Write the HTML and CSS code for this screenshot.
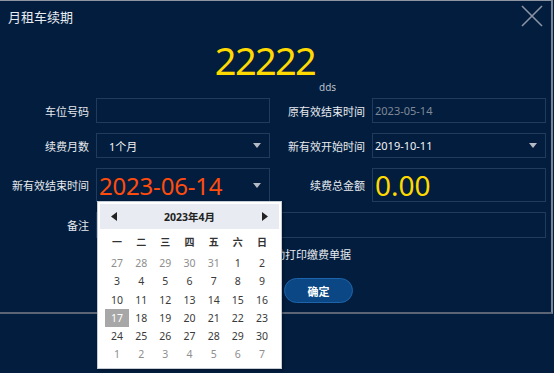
FILE: index.html
```html
<!DOCTYPE html>
<html lang="zh-CN">
<head>
    <meta charset="UTF-8">
    <meta name="viewport" content="width=device-width, initial-scale=1.0">
    <title>月租车续期</title>
<link rel="stylesheet" href="styles.css">
</head>
<body>
    <div class="page">
    <div class="dialog">
        <div class="dialog-head">
            <span class="dialog-title">月租车续期</span>
            <button class="close-btn" aria-label="关闭">
                <svg width="22" height="22" viewBox="0 0 22 22">
                    <path d="M1 1 L21 21 M21 1 L1 21" stroke="#8b94a3" stroke-width="1.6" fill="none"/>
                </svg>
            </button>
        </div>

        <div class="amount">
            <span class="amount-num">22222</span><span class="amount-unit">dds</span>
        </div>

        <div class="form">
            <label class="f-label">车位号码</label>
            <div class="f-box"></div>

            <label class="f-label">原有效结束时间</label>
            <div class="f-box f-right muted">2023-05-14</div>

            <label class="f-label">续费月数</label>
            <div class="f-box select">1个月<i class="caret"></i></div>

            <label class="f-label">新有效开始时间</label>
            <div class="f-box f-right select">2019-10-11<i class="caret"></i></div>

            <label class="f-label">新有效结束时间</label>
            <div class="f-box f-right select date-field">
                <span class="date-big">2023-06-14</span><i class="caret"></i>

                <div class="calendar">
                    <div class="cal-head">
                        <svg width="6" height="9" viewBox="0 0 6 9"><path d="M6 0 L0 4.5 L6 9 Z" fill="#222"/></svg>
                        <span class="cal-title">2023年4月</span>
                        <svg width="6" height="9" viewBox="0 0 6 9"><path d="M0 0 L6 4.5 L0 9 Z" fill="#222"/></svg>
                    </div>
                    <div class="cal-week">
                        <span>一</span><span>二</span><span>三</span><span>四</span><span>五</span><span>六</span><span>日</span>
                    </div>
                    <div class="cal-days">
                        <span class="other">27</span><span class="other">28</span><span class="other">29</span><span class="other">30</span><span class="other">31</span><span>1</span><span>2</span>
                        <span>3</span><span>4</span><span>5</span><span>6</span><span>7</span><span>8</span><span>9</span>
                        <span>10</span><span>11</span><span>12</span><span>13</span><span>14</span><span>15</span><span>16</span>
                        <span class="picked">17</span><span>18</span><span>19</span><span>20</span><span>21</span><span>22</span><span>23</span>
                        <span>24</span><span>25</span><span>26</span><span>27</span><span>28</span><span>29</span><span>30</span>
                        <span class="other">1</span><span class="other">2</span><span class="other">3</span><span class="other">4</span><span class="other">5</span><span class="other">6</span><span class="other">7</span>
                    </div>
                </div>
            </div>

            <label class="f-label">续费总金额</label>
            <div class="f-box f-right total">0.00</div>

            <label class="f-label">备注</label>
            <div class="f-box wide"></div>
        </div>

        <div class="print-row">
            <input type="checkbox" class="print-check">
            <span>自动打印缴费单据</span>
        </div>

        <div class="actions">
            <button class="ok-btn">确定</button>
        </div>
    </div>
    </div>
</body>
</html>
```

FILE: styles.css
```css
html,
body {
    margin: 0;
    min-height: 100vh;
    background-color: #021d3d;
}

body {
    font-family: "Noto Sans", "Noto Sans CJK SC", sans-serif;
    color: #e6eaf0;
}

.page {
    min-height: 373px;
}

.dialog {
    position: relative;
    width: 551px;
    height: 311px;
    background-color: #021d3d;
    border-top: 1px solid #8e96a3;
    border-right: 2px solid #7b8595;
    border-bottom: 2px solid #5b6576;
}

.dialog-head {
    height: 30px;
    display: flex;
    align-items: center;
    padding-left: 8px;
}

.dialog-title {
    font-size: 13px;
    color: #e8ecf2;
}

.close-btn {
    position: absolute;
    top: 4px;
    right: 8px;
    padding: 0;
    border: none;
    background: none;
    cursor: pointer;
}

.amount {
    height: 67px;
    box-sizing: border-box;
    padding-top: 10px;
    text-align: center;
    line-height: 38px;
}

.amount-num {
    font-size: 38px;
    letter-spacing: -1.7px;
    color: #ffd900;
}

.amount-unit {
    margin-left: 4px;
    font-size: 10px;
    color: #b9c0cc;
    vertical-align: -16px;
}

.form {
    display: grid;
    grid-template-columns: 88px 174px 88px 174px;
    grid-template-rows: 25px 25px 34px 26px;
    column-gap: 7px;
    row-gap: 10px;
    margin-left: 1px;
}

.f-label {
    align-self: center;
    text-align: right;
    font-size: 11px;
    white-space: nowrap;
    color: #e6eaf0;
}

.f-box {
    position: relative;
    display: flex;
    align-items: center;
    box-sizing: border-box;
    padding: 0 12px;
    border: 1px solid #223a5b;
    font-size: 11px;
    color: #f2f4f7;
}

.f-right {
    padding-left: 2px;
}

.muted {
    color: #7f8999;
}

.select {
    justify-content: space-between;
    padding-right: 8px;
}

.caret {
    width: 0;
    height: 0;
    border-left: 4px solid transparent;
    border-right: 4px solid transparent;
    border-top: 5px solid #b5bbc5;
}

.date-big {
    font-size: 24px;
    color: #ff4c0e;
    letter-spacing: -0.2px;
}

.total {
    font-size: 28px;
    color: #ffd900;
}

.wide {
    grid-column: 2 / 5;
}

.print-row {
    display: flex;
    align-items: center;
    gap: 3px;
    height: 20px;
    margin-top: 6px;
    padding-left: 248px;
    font-size: 11px;
    color: #e6eaf0;
}

.print-check {
    width: 12px;
    height: 12px;
    margin: 0;
}

.actions {
    margin-top: 14px;
    padding-left: 284px;
}

.ok-btn {
    width: 69px;
    height: 25px;
    border: 1px solid #1d64aa;
    border-radius: 13px;
    background-color: #0b4784;
    color: #ffffff;
    font-family: "Noto Sans CJK SC", sans-serif;
    font-size: 11px;
    font-weight: 700;
    cursor: pointer;
}

/* date picker dropdown */
.calendar {
    position: absolute;
    top: 100%;
    left: 0;
    z-index: 5;
    width: 185px;
    height: 168px;
    box-sizing: border-box;
    padding: 2px 7px;
    background-color: #ffffff;
    border: 1px solid #c6ccd5;
    box-shadow: 1px 1px 2px rgba(0, 0, 0, 0.35);
    font-family: "Noto Sans", "Noto Sans CJK SC", sans-serif;
}

.cal-head {
    display: flex;
    align-items: center;
    justify-content: space-between;
    height: 25px;
    margin: 0 -5px;
    padding: 0 11px;
    background-color: #e8ecf2;
}

.cal-title {
    font-size: 10.5px;
    font-weight: 700;
    color: #222;
}

.cal-week,
.cal-days {
    display: grid;
    grid-template-columns: repeat(7, 1fr);
    text-align: center;
}

.cal-week {
    height: 18px;
    margin-top: 4px;
    line-height: 18px;
    font-size: 10px;
    font-weight: 700;
    color: #333;
}

.cal-days {
    grid-auto-rows: 18.3px;
    margin-top: 3px;
    font-size: 10.5px;
    color: #3a3a3a;
}

.cal-days span {
    line-height: 18.3px;
}

.cal-days .other {
    color: #8e8e8e;
}

.cal-days .picked {
    background-color: #a7a7a7;
    color: #ffffff;
}
```
